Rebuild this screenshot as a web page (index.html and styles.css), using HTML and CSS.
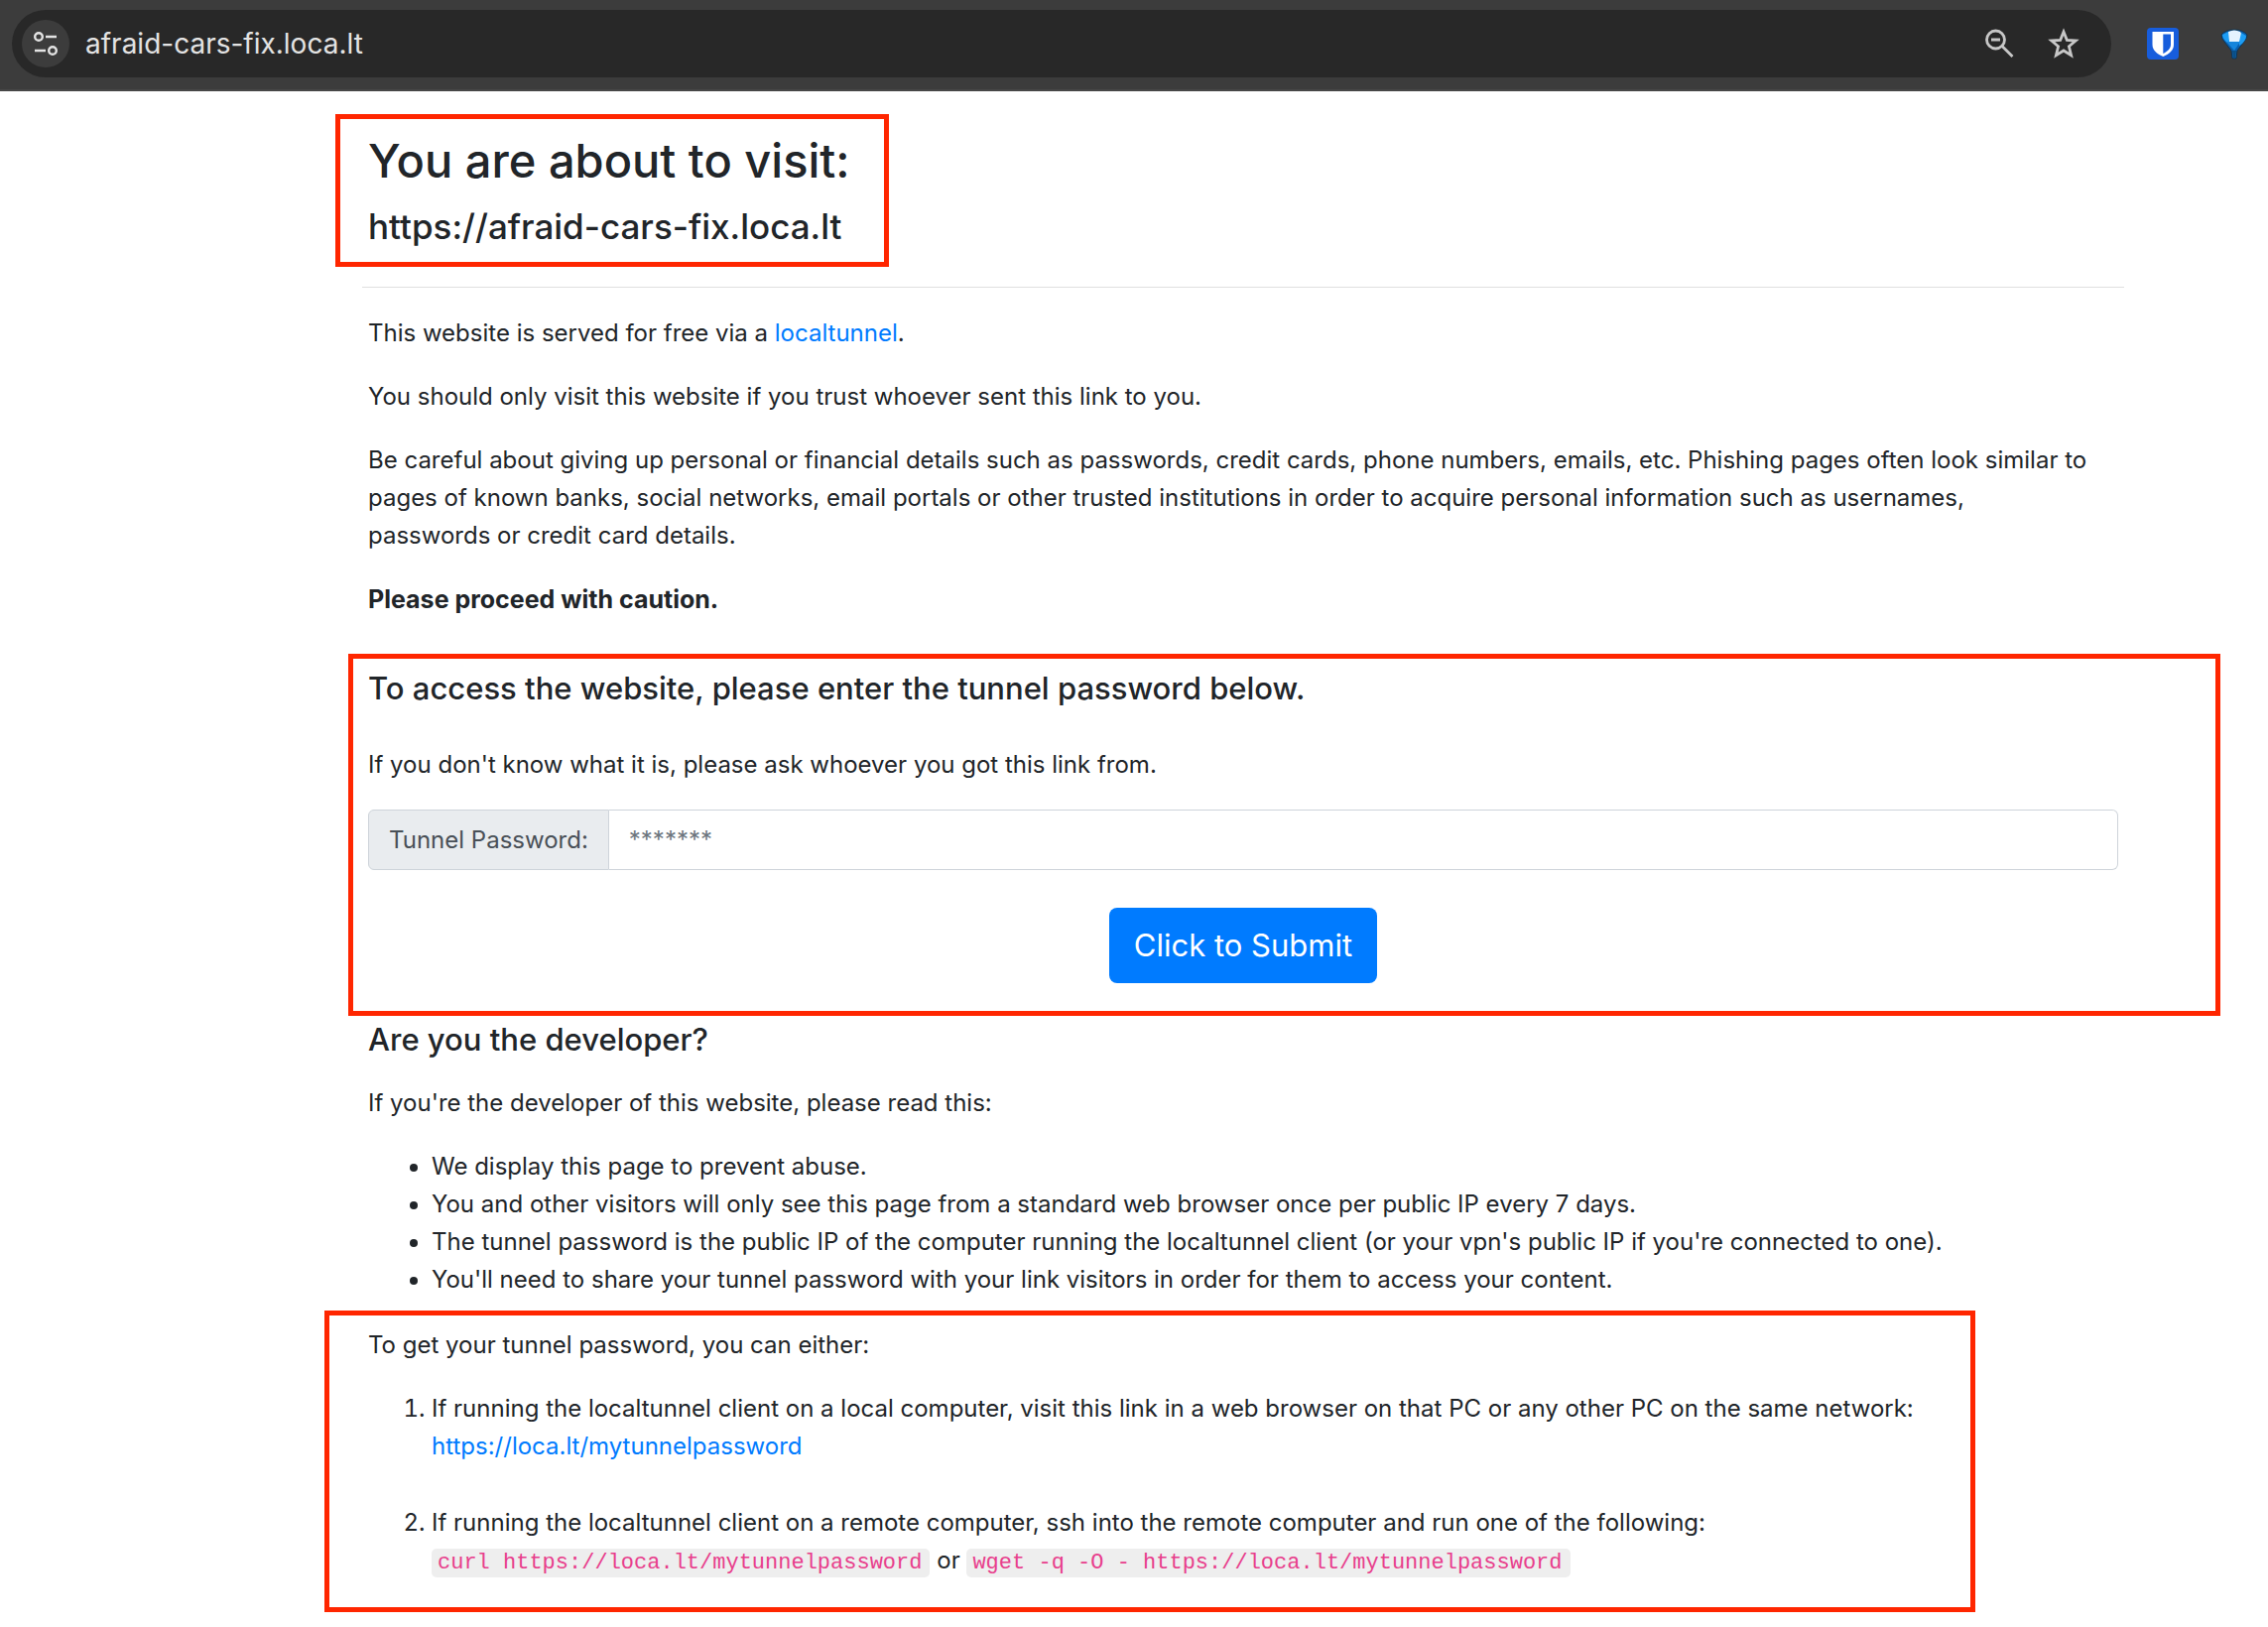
FILE: index.html
```html
<!DOCTYPE html>
<html lang="en">
<head>
<meta charset="utf-8">
<meta name="viewport" content="width=device-width, initial-scale=1">
<title>afraid-cars-fix.loca.lt</title>
<link rel="stylesheet" href="styles.css">
</head>
<body>
<header class="toolbar">
  <div class="omnibox">
    <button class="site-info" type="button" aria-label="View site information">
      <svg width="28" height="28" viewBox="0 0 28 28" fill="none" stroke="#e3e3e3" stroke-width="2.4">
        <circle cx="7" cy="7" r="3.8"/><path d="M14 7h11M3 21h11"/><circle cx="21" cy="21" r="3.8"/>
      </svg>
    </button>
    <input class="address" type="text" value="afraid-cars-fix.loca.lt" aria-label="Address">
    <button class="tool" type="button" aria-label="Zoom">
      <svg width="30" height="30" viewBox="0 0 30 30" fill="none" stroke="#c7c7c7" stroke-width="2.8">
        <circle cx="11.5" cy="11" r="9"/><path d="M7 11h9M18 17.500l10.500 10.500"/>
      </svg>
    </button>
    <button class="tool" type="button" aria-label="Bookmark this tab">
      <svg width="32" height="32" viewBox="0 0 32 32" fill="none" stroke="#c7c7c7" stroke-width="2.8">
        <path d="M16 4l3.300 8.300 9 .7-6.900 5.800 2.200 8.900L16 23l-7.600 4.700 2.200-8.900L3.700 13l9-.7z"/>
      </svg>
    </button>
  </div>
  <div class="extensions">
    <button class="tool" type="button" aria-label="Password manager">
      <svg width="32" height="32" viewBox="0 0 32 32">
        <rect width="32" height="32" rx="4" fill="#175ddc"/>
        <path d="M5.500 4h21.500v13c0 6-5 9.500-10.700 12C10.500 26.500 5.500 23 5.500 17z" fill="#fff"/>
        <path d="M16.300 6.500H24V17c0 4-3.500 7-7.700 9z" fill="#175ddc"/>
      </svg>
    </button>
    <button class="tool" type="button" aria-label="Extension">
      <svg width="28" height="32" viewBox="0 0 28 32">
        <path d="M1 7Q5 2 14 2t13 5q0 4-3 7l-7 9-1 8h-4l-1-8-7-9Q1 11 1 7z" fill="#0a5fae" stroke="#12354f"/>
        <path d="M8 4q6-3 12 0l3 5-4 5H9L7 9z" fill="#e4f3ff"/>
        <path d="M2 7l6-3 1 10-2 1Q2 11 2 7zM19 14l2-9 5 3q0 4-4 8l-3 2z" fill="#1c9df5"/>
        <path d="M6 14h14l-6 9z" fill="#1585dc"/>
        <path d="M12 23h4l-1 7h-2z" fill="#0a4f86"/>
      </svg>
    </button>
  </div>
</header>

<main class="page">
  <section class="intro marked">
    <h1>You are about to visit:</h1>
    <h2>https://afraid-cars-fix.loca.lt</h2>
  </section>
  <hr>
  <p>This website is served for free via a <a href="https://localtunnel.me">localtunnel</a>.</p>
  <p>You should only visit this website if you trust whoever sent this link to you.</p>
  <p>Be careful about giving up personal or financial details such as passwords, credit cards, phone numbers, emails, etc. Phishing pages often look similar to pages of known banks, social networks, email portals or other trusted institutions in order to acquire personal information such as usernames, passwords&nbsp;or credit card details.</p>
  <p><strong>Please proceed with caution.</strong></p>

  <form class="access marked">
    <h3>To access the website, please enter the tunnel password below.</h3>
    <p>If you don't know what it is, please ask whoever you got this link from.</p>
    <div class="input-group">
      <label for="password">Tunnel Password:</label>
      <input id="password" type="text" placeholder="*******">
    </div>
    <button class="submit" type="button">Click to Submit</button>
  </form>

  <section class="developer">
    <h3>Are you the developer?</h3>
    <p>If you're the developer of this website, please read this:</p>
    <ul>
      <li>We display this page to prevent abuse.</li>
      <li>You and other visitors will only see this page from a standard web browser once per public IP every 7 days.</li>
      <li>The tunnel password is the public IP of the computer running the localtunnel client (or your vpn's public IP if you're connected to one).</li>
      <li>You'll need to share your tunnel password with your link visitors in order for them to access your content.</li>
    </ul>
  </section>

  <section class="retrieve marked">
    <p>To get your tunnel password, you can either:</p>
    <ol>
      <li>If running the localtunnel client on a local computer, visit this link in a web browser on that PC or any other PC on the same network:<br><a href="https://loca.lt/mytunnelpassword">https://loca.lt/mytunnelpassword</a></li>
      <li>If running the localtunnel client on a remote computer, ssh into the remote computer and run one of the following:<br><code>curl https://loca.lt/mytunnelpassword</code> or <code>wget -q -O - https://loca.lt/mytunnelpassword</code></li>
    </ol>
  </section>
</main>
</body>
</html>
```
FILE: styles.css
```css
* {
  box-sizing: border-box;
}

body {
  margin: 0;
  background: #fff;
  color: #212529;
  font-family: Inter, "Liberation Sans", sans-serif;
  font-size: 24px;
  line-height: 38px;
}

h1, h2, h3, p, ul, ol {
  margin: 0;
}

h1, h2, h3 {
  font-weight: 500;
}

strong {
  font-size: 25px;
}

button, input {
  font: inherit;
}

a {
  color: #007bff;
  text-decoration: none;
}

/* Browser bar */
.toolbar {
  display: flex;
  align-items: center;
  gap: 36px;
  padding: 10px 20px 12px 12px;
  border-bottom: 2px solid #474747;
  background: #3c3c3c;
}

.omnibox {
  display: flex;
  flex: 1;
  align-items: center;
  gap: 34px;
  height: 68px;
  padding: 0 32px 0 10px;
  border-radius: 34px;
  background: #282828;
}

.site-info {
  display: grid;
  place-items: center;
  width: 48px;
  height: 48px;
  padding: 0;
  border: 0;
  border-radius: 50%;
  background: #3c3c3c;
}

.address {
  flex: 1;
  min-width: 0;
  margin-left: -18px;
  padding: 0;
  border: 0;
  background: transparent;
  color: #e3e3e3;
  font-size: 28px;
}

.tool {
  display: flex;
  padding: 0;
  border: 0;
  background: none;
}

.extensions {
  display: flex;
  align-items: center;
  gap: 42px;
}

/* Warning page */
.page {
  padding: 39px 151px 46px 371px;
}

.page p {
  margin-bottom: 26px;
}

.marked {
  position: relative;
}

.marked::after {
  content: "";
  position: absolute;
  border: 5px solid #ff2600;
  pointer-events: none;
}

.intro {
  width: fit-content;
}

.intro::after {
  inset: -16px -39px -18px -33px;
}

h1 {
  font-size: 47px;
  line-height: 61px;
}

h2 {
  margin-top: 13px;
  font-size: 35px;
  line-height: 46px;
}

h3 {
  font-size: 31px;
  line-height: 38px;
}

hr {
  margin: 38px -6px 27px;
  border: 0;
  border-top: 1px solid #e0e0e0;
}

.access {
  margin-top: 51px;
}

.access::after {
  inset: -16px -103px -33px -20px;
}

.access h3 {
  margin-bottom: 39px;
}

.input-group {
  display: flex;
  height: 61px;
}

.input-group label {
  padding: 11px 20px;
  border: 1px solid #ced4da;
  border-radius: 6px 0 0 6px;
  background: #e9ecef;
  color: #495057;
}

.input-group input {
  flex: 1;
  min-width: 0;
  padding: 0 20px;
  border: 1px solid #ced4da;
  border-left: 0;
  border-radius: 0 6px 6px 0;
  background: #fff;
}

.input-group input::placeholder {
  color: #6c757d;
  opacity: 1;
}

.submit {
  display: block;
  height: 76px;
  margin: 38px auto 0;
  padding: 0 25px;
  border: 0;
  border-radius: 8px;
  background: #007bff;
  color: #fff;
  font-size: 31px;
}

.developer {
  margin-top: 38px;
}

.developer h3 {
  margin-bottom: 26px;
}

ul, ol {
  padding-left: 64px;
}

ul {
  margin-bottom: 28px;
}

.retrieve::after {
  inset: -16px 144px -30px -44px;
}

.retrieve li + li {
  margin-top: 39px;
}

code {
  padding: 2px 8px 2px 6px;
  border-radius: 5px;
  background: #eee;
  color: #e83e8c;
  font-family: "Liberation Mono", monospace;
  font-size: 22px;
}
```
